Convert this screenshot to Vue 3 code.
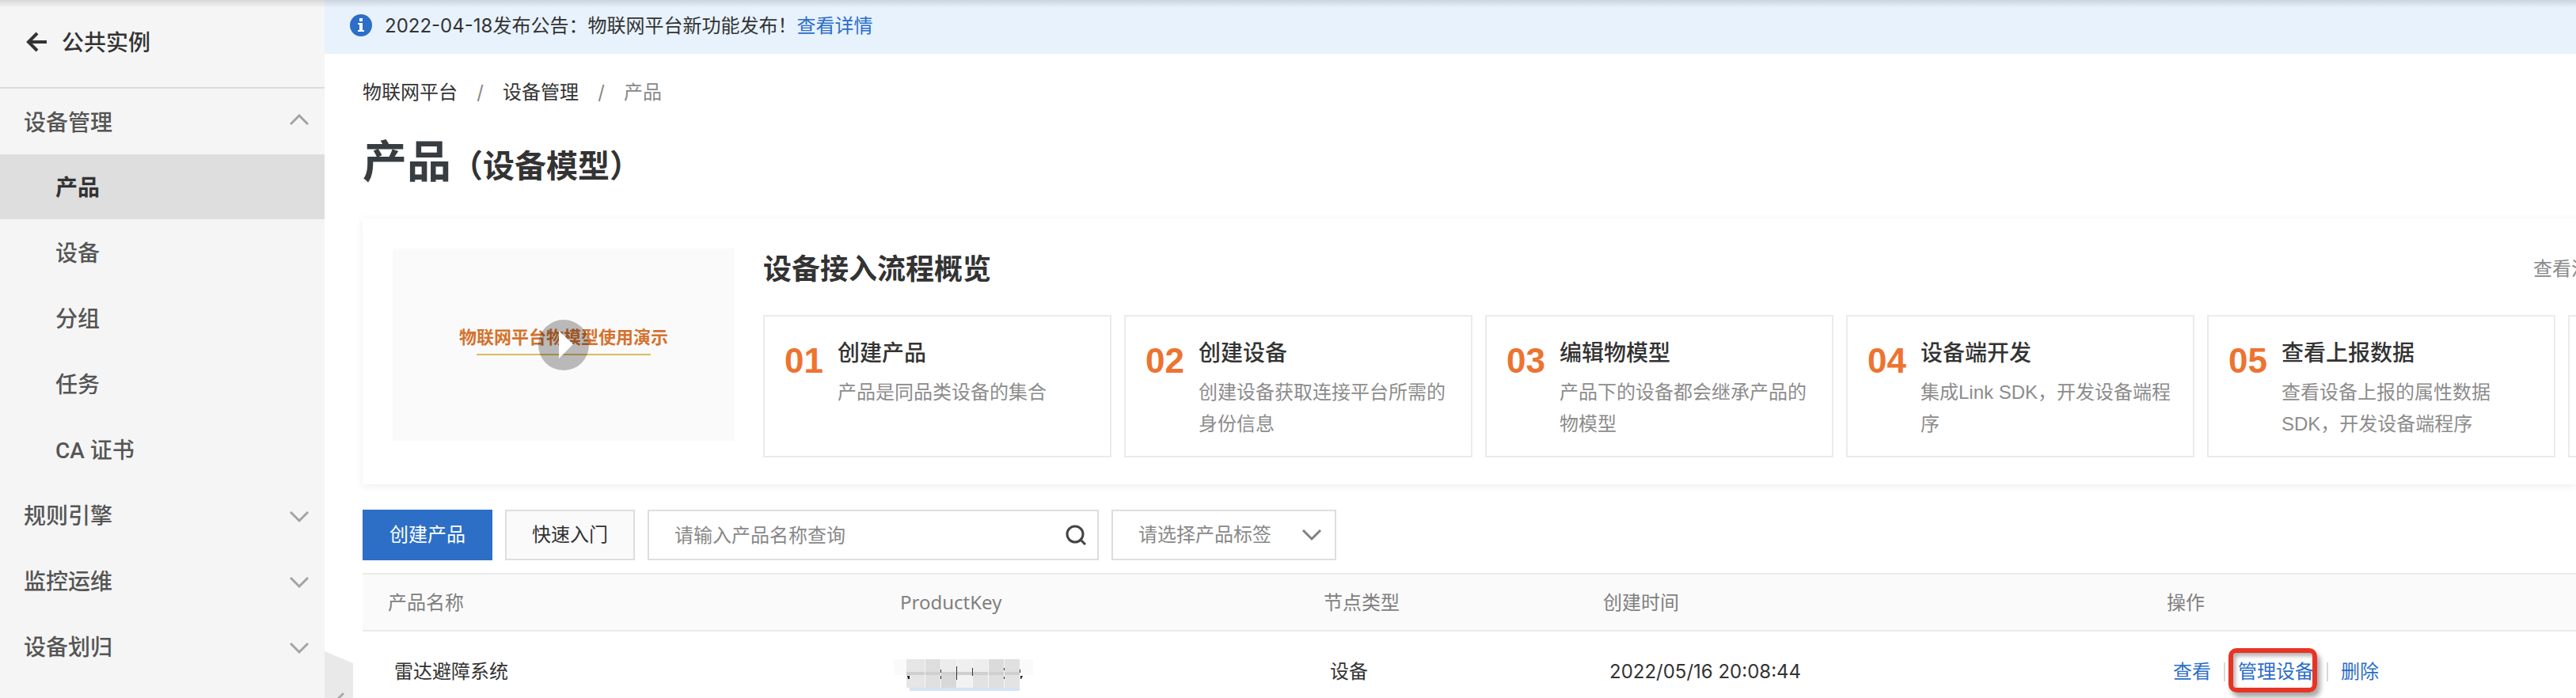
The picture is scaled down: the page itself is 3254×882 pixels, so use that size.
<script setup>
import { ref } from 'vue'

const subItems = ['产品', '设备', '分组', '任务', 'CA 证书']
const groups = ['规则引擎', '监控运维', '设备划归']
const steps = [
  { no: '01', title: '创建产品', desc: '产品是同品类设备的集合' },
  { no: '02', title: '创建设备', desc: '创建设备获取连接平台所需的身份信息' },
  { no: '03', title: '编辑物模型', desc: '产品下的设备都会继承产品的物模型' },
  { no: '04', title: '设备端开发', desc: '集成Link SDK，开发设备端程序' },
  { no: '05', title: '查看上报数据', desc: '查看设备上报的属性数据SDK，开发设备端程序' }
]
const mosaic = [
  { x: 16, top: '#e6e6e6', low: '#e6e6e6' },
  { x: 39, top: '#dedede', low: '#e0e0e0' },
  { x: 59, top: '#ececec', low: '#d8d8d8' },
  { x: 79, top: '#efefef', low: '#f2f2f2' },
  { x: 99, top: '#ededed', low: '#e2e2e2' },
  { x: 119, top: '#dbdbdb', low: '#dfdfdf' },
  { x: 139, top: '#e0e0e0', low: '#e3e3e3' }
]
const keyword = ref('')
const tag = ref('')
</script>

<template>
  <div class="page">
    <aside class="sidebar">
      <header class="side-head">
        <a href="#" class="back" aria-label="返回">
          <svg width="28" height="26" viewBox="0 0 28 26" fill="none" stroke="#333" stroke-width="4">
            <path d="M27 13H4M15 2L4 13l11 11" />
          </svg>
        </a>
        <span>公共实例</span>
      </header>
      <nav>
        <button class="group" type="button">
          <span>设备管理</span>
          <svg width="24" height="20" viewBox="0 0 24 20" fill="none" stroke="#a3a3a3" stroke-width="3">
            <path d="M1 13L12 2l11 11" />
          </svg>
        </button>
        <ul class="subs">
          <li v-for="(s, i) in subItems" :key="s">
            <a href="#" class="sub" :class="{ active: i === 0 }">{{ s }}</a>
          </li>
        </ul>
        <button v-for="g in groups" :key="g" class="group" type="button">
          <span>{{ g }}</span>
          <svg width="24" height="20" viewBox="0 0 24 20" fill="none" stroke="#a3a3a3" stroke-width="3">
            <path d="M1 6l11 11L23 6" />
          </svg>
        </button>
      </nav>
      <button class="collapse" type="button" aria-label="收起">
        <svg width="36" height="59" viewBox="0 0 36 59">
          <path d="M0 0L36 15V59H0Z" fill="#e9e9e9" />
          <path d="M24 53L15 62" stroke="#aaa" stroke-width="3" fill="none" />
        </svg>
      </button>
    </aside>

    <main class="main">
      <div class="notice">
        <svg width="28" height="28" viewBox="0 0 28 28">
          <circle cx="14" cy="14" r="14" fill="#2c6ec8" />
          <path d="M12 5h4v4h-4zM10 11h6v9h2v2h-8v-2h2v-7h-2z" fill="#fff" />
        </svg>
        <p>2022-04-18发布公告：物联网平台新功能发布！<a href="#">查看详情</a></p>
      </div>

      <div class="content">
        <nav class="crumbs">
          <a href="#">物联网平台</a><i>/</i><a href="#">设备管理</a><i>/</i><span>产品</span>
        </nav>
        <h1>产品<small>（设备模型）</small></h1>

        <section class="panel">
          <div class="video">
            <p>物联网平台物模型使用演示</p>
            <button class="play" type="button" aria-label="播放">
              <svg width="64" height="64" viewBox="0 0 64 64">
                <path d="M26 14L44 31L26 49Z" fill="#fff" />
              </svg>
            </button>
          </div>
          <div class="flow">
            <div class="flow-head">
              <h2>设备接入流程概览</h2>
              <a href="#">查看流</a>
            </div>
            <ol class="steps">
              <li v-for="s in steps" :key="s.no" class="step">
                <b>{{ s.no }}</b>
                <div>
                  <h3>{{ s.title }}</h3>
                  <p>{{ s.desc }}</p>
                </div>
              </li>
              <li class="step"></li>
            </ol>
          </div>
        </section>

        <div class="tools">
          <button class="btn primary" type="button">创建产品</button>
          <button class="btn" type="button">快速入门</button>
          <label class="field search">
            <input v-model="keyword" type="text" placeholder="请输入产品名称查询" aria-label="产品名称" />
            <svg width="26" height="26" viewBox="0 0 26 26" fill="none" stroke="#444" stroke-width="3">
              <circle cx="12" cy="12" r="10" />
              <path d="M18 18l7 7" />
            </svg>
          </label>
          <label class="field tag">
            <select v-model="tag" aria-label="产品标签">
              <option value="">请选择产品标签</option>
            </select>
            <svg width="26" height="16" viewBox="0 0 26 16" fill="none" stroke="#808080" stroke-width="3">
              <path d="M2 2l11 11L24 2" />
            </svg>
          </label>
        </div>

        <table class="list">
          <colgroup>
            <col class="c-name" /><col class="c-key" /><col class="c-type" /><col class="c-time" /><col />
          </colgroup>
          <thead>
            <tr>
              <th>产品名称</th>
              <th>ProductKey</th>
              <th>节点类型</th>
              <th>创建时间</th>
              <th>操作</th>
            </tr>
          </thead>
          <tbody>
            <tr>
              <td>雷达避障系统</td>
              <td>
                <svg class="mosaic" width="176" height="40" viewBox="0 0 176 40">
                  <rect x="0" y="0" width="176" height="20" fill="#fafafa" />
                  <g v-for="m in mosaic" :key="m.x">
                    <rect :x="m.x" y="0" width="20" height="20" :fill="m.top" />
                    <rect :x="m.x" y="20" width="20" height="16" :fill="m.low" />
                  </g>
                  <rect x="35" y="0" width="4" height="36" fill="#e6e6e6" />
                  <rect x="16" y="16" width="143" height="4" fill="#cfcfcf" />
                  <rect x="20" y="36" width="139" height="4" fill="#d5e3f5" />
                  <path d="M39.500 0V36M59.500 0V36M79.500 0V36M99.500 0V36M119.500 0V36M139.500 0V36" stroke="#f6f6f6" />
                  <path d="M59.500 13V17M59.500 21V25M79.500 9V26M99.500 11V21M139.500 11V14M139.500 22V25M159.500 13V17" stroke="#333" />
                  <path d="M17 21h3v4h-2zM160 21h3l-2 4h-1z" fill="#222" />
                </svg>
              </td>
              <td>设备</td>
              <td>2022/05/16 20:08:44</td>
              <td>
                <div class="ops">
                  <a href="#">查看</a>
                  <a href="#" class="marked">管理设备</a>
                  <a href="#">删除</a>
                </div>
              </td>
            </tr>
          </tbody>
        </table>
      </div>
    </main>
    <div class="top-shade"></div>
  </div>
</template>

<style>
body {
  margin: 0;
  background: #fff;
}
</style>

<style scoped>
* {
  box-sizing: border-box;
}
.page {
  position: relative;
  display: flex;
  height: 100vh;
  overflow: hidden;
  font-family: Inter, "Noto Sans CJK SC", sans-serif;
  font-size: 24px;
  line-height: 40px;
  color: #333;
}
a {
  color: inherit;
  text-decoration: none;
}
button {
  padding: 0;
  border: 0;
  background: none;
  font: inherit;
  color: inherit;
}
h1, h2, h3, p, ul, ol {
  margin: 0;
  padding: 0;
  list-style: none;
}
svg {
  display: block;
  flex: none;
}
.top-shade {
  position: absolute;
  inset: 0 0 auto;
  height: 10px;
  background: linear-gradient(rgba(0, 0, 0, 0.12), rgba(0, 0, 0, 0));
}

.sidebar {
  position: relative;
  flex: none;
  width: 410px;
  background: #f5f5f5;
  font-family: Roboto, "Noto Sans CJK SC", sans-serif;
  font-size: 28px;
  font-weight: 500;
  color: #555;
}
.side-head {
  display: flex;
  align-items: center;
  gap: 18px;
  height: 112px;
  padding: 0 32px 4px;
  border-bottom: 2px solid #dcdcdc;
  color: #333;
}
.side-head span,
.group span {
  padding-top: 4px;
}
.group {
  display: flex;
  align-items: center;
  justify-content: space-between;
  width: 100%;
  height: 83px;
  padding: 0 20px 0 30px;
}
.subs {
  display: flex;
  flex-direction: column;
  gap: 1px;
}
.sub {
  display: flex;
  align-items: center;
  height: 82px;
  padding: 4px 0 0 70px;
}
.sub.active {
  background: #dedede;
  color: #333;
  font-weight: 700;
}
.collapse {
  position: absolute;
  left: 100%;
  bottom: 0;
  z-index: 1;
}

.main {
  flex: 1;
  min-width: 0;
  overflow: hidden;
}
.notice {
  display: flex;
  align-items: center;
  gap: 16px;
  height: 68px;
  padding: 0 32px 4px;
  background: #e8f2fd;
}
.notice p {
  padding-top: 2px;
}
.notice a,
.ops a {
  color: #2c6ec8;
}
.content {
  padding: 29px 0 0 48px;
}
.crumbs {
  display: flex;
  line-height: 40px;
}
.crumbs i {
  width: 57px;
  font-style: normal;
  text-align: center;
  color: #888;
}
.crumbs span {
  color: #888;
}
h1 {
  height: 80px;
  margin-top: 27px;
  font-size: 56px;
  line-height: 80px;
  font-weight: 700;
  color: #373d41;
}
h1 small {
  font-size: 40px;
  line-height: 40px;
  color: #333;
}

.panel {
  display: flex;
  gap: 36px;
  height: 336px;
  margin-top: 32px;
  padding: 38px 0 0 38px;
  background: #fff;
  box-shadow: 0 2px 10px rgba(0, 0, 0, 0.07);
}
.video {
  position: relative;
  flex: none;
  width: 432px;
  height: 243px;
  padding-top: 92px;
  background: #fafafa;
  text-align: center;
}
.video p {
  font-size: 22px;
  font-weight: 700;
  color: #d4722e;
}
.video p::after {
  content: "";
  display: block;
  width: 220px;
  height: 2px;
  margin: 1px auto 0;
  background: #dcbc62;
}
.play {
  position: absolute;
  left: 184px;
  top: 90px;
  border-radius: 50%;
  background: rgba(0, 0, 0, 0.26);
}
.flow {
  flex: 1;
  min-width: 0;
}
.flow-head {
  display: flex;
  align-items: center;
  justify-content: space-between;
  margin: 6px -18px 0 0;
}
.flow-head a {
  color: #888;
}
h2 {
  font-size: 36px;
  font-weight: 700;
}
.steps {
  display: flex;
  gap: 16px;
  margin-top: 38px;
}
.step {
  display: flex;
  flex: 0 0 440px;
  height: 180px;
  padding: 24px 24px 0 25px;
  border: 2px solid #ebebeb;
}
.step b {
  flex: none;
  width: 67px;
  font-family: "Liberation Sans", sans-serif;
  font-size: 44px;
  line-height: 64px;
  color: #ed7330;
}
h3 {
  font-size: 28px;
  font-weight: 500;
  line-height: 44px;
}
.step p {
  margin-top: 8px;
  font-family: "Liberation Sans", "Noto Sans CJK SC", sans-serif;
  color: #8c8c8c;
}

.tools {
  display: flex;
  gap: 16px;
  margin: 32px 0 16px;
}
.btn,
.field {
  height: 64px;
  border: 2px solid #dedede;
}
.btn {
  width: 164px;
  background: #fafafa;
}
.btn.primary {
  border-color: #2d6fc6;
  background: #2d6fc6;
  color: #fff;
}
.field {
  display: flex;
  align-items: center;
}
.search {
  width: 570px;
  padding: 0 14px 0 32px;
}
.tag {
  width: 284px;
  padding: 0 16px 0 32px;
}
.field input,
.field select {
  flex: 1;
  min-width: 0;
  height: 60px;
  padding: 0;
  border: 0;
  outline: 0;
  appearance: none;
  background: none;
  font: inherit;
  color: #888;
}
.field input::placeholder {
  color: #888;
}

.list {
  width: 100%;
  table-layout: fixed;
  border-collapse: separate;
  border-spacing: 0;
  text-align: left;
}
.c-name { width: 647px; }
.c-key { width: 535px; }
.c-type { width: 353px; }
.c-time { width: 712px; }
.list th {
  height: 74px;
  padding: 0 32px;
  border: solid #ebebeb;
  border-width: 2px 0;
  background: #fafafa;
  font-family: "Noto Sans", "Noto Sans CJK SC", sans-serif;
  font-weight: 400;
  color: #808080;
}
.list td {
  height: 102px;
  padding: 0 40px;
}
.mosaic {
  margin: 8px 0 0 -16px;
}
.ops {
  display: flex;
  align-items: center;
}
.ops a + a {
  display: flex;
  align-items: center;
}
.ops a + a::before {
  content: "";
  width: 2px;
  height: 24px;
  margin: 0 16px;
  background: #d8d8d8;
}
.marked {
  position: relative;
}
.marked::after {
  content: "";
  position: absolute;
  inset: -10px -4px -6px 22px;
  border: 6px solid #e83424;
  border-radius: 10px;
  box-shadow: 4px 6px 6px rgba(0, 0, 0, 0.35), inset 3px 4px 5px rgba(0, 0, 0, 0.3);
}
</style>
